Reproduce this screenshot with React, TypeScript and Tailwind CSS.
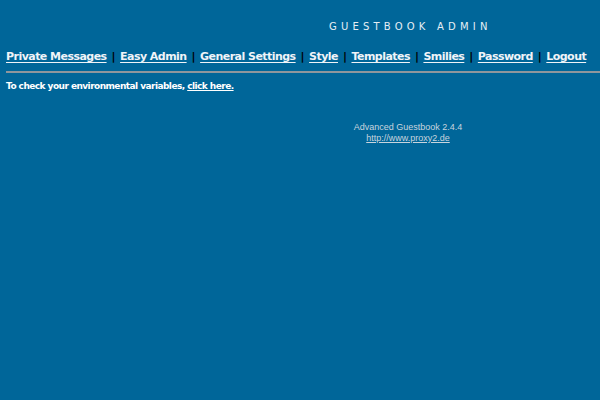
export default function App() {
  const links = [
    'Private Messages',
    'Easy Admin',
    'General Settings',
    'Style',
    'Templates',
    'Smilies',
    'Password',
    'Logout',
  ]

  return (
    <main className="min-h-[400px] w-[600px] overflow-hidden bg-[#006699] pt-[20px] font-['DejaVu_Sans',Verdana,sans-serif]">
      {/* Title */}
      <div className="pl-[329px] text-[10px] leading-[14px] tracking-[4.2px] text-[#e6eef5]">
        GUESTBOOK ADMIN
      </div>

      {/* Nav */}
      <nav className="mt-[15px] flex items-center pl-[6px] text-[11px] leading-[16px] font-bold tracking-[-0.54px] whitespace-nowrap text-[#f0f4f8]">
        {links.map((l, i) => (
          <span key={l} className="flex items-center">
            {i > 0 && <span className="mx-[5px] text-black">|</span>}
            <a href="#" className="underline underline-offset-2">{l}</a>
          </span>
        ))}
      </nav>

      <div className="mt-[6px] ml-[6px] h-[2px] bg-[#8f969c]" />

      <p className="mt-[7px] pl-[6px] text-[9px] leading-[12px] font-bold tracking-[-0.55px] text-white">
        To check your environmental variables,{' '}
        <a href="#" className="underline">click here.</a>
      </p>

      {/* Footer */}
      <div className="mt-[30px] ml-[300px] w-[216px] text-center font-['Liberation_Sans',Arial,sans-serif] text-[9px] leading-[11px] text-[#c8d4de]">
        <div>Advanced Guestbook 2.4.4</div>
        <a href="#" className="underline">http://www.proxy2.de</a>
      </div>
    </main>
  )
}
